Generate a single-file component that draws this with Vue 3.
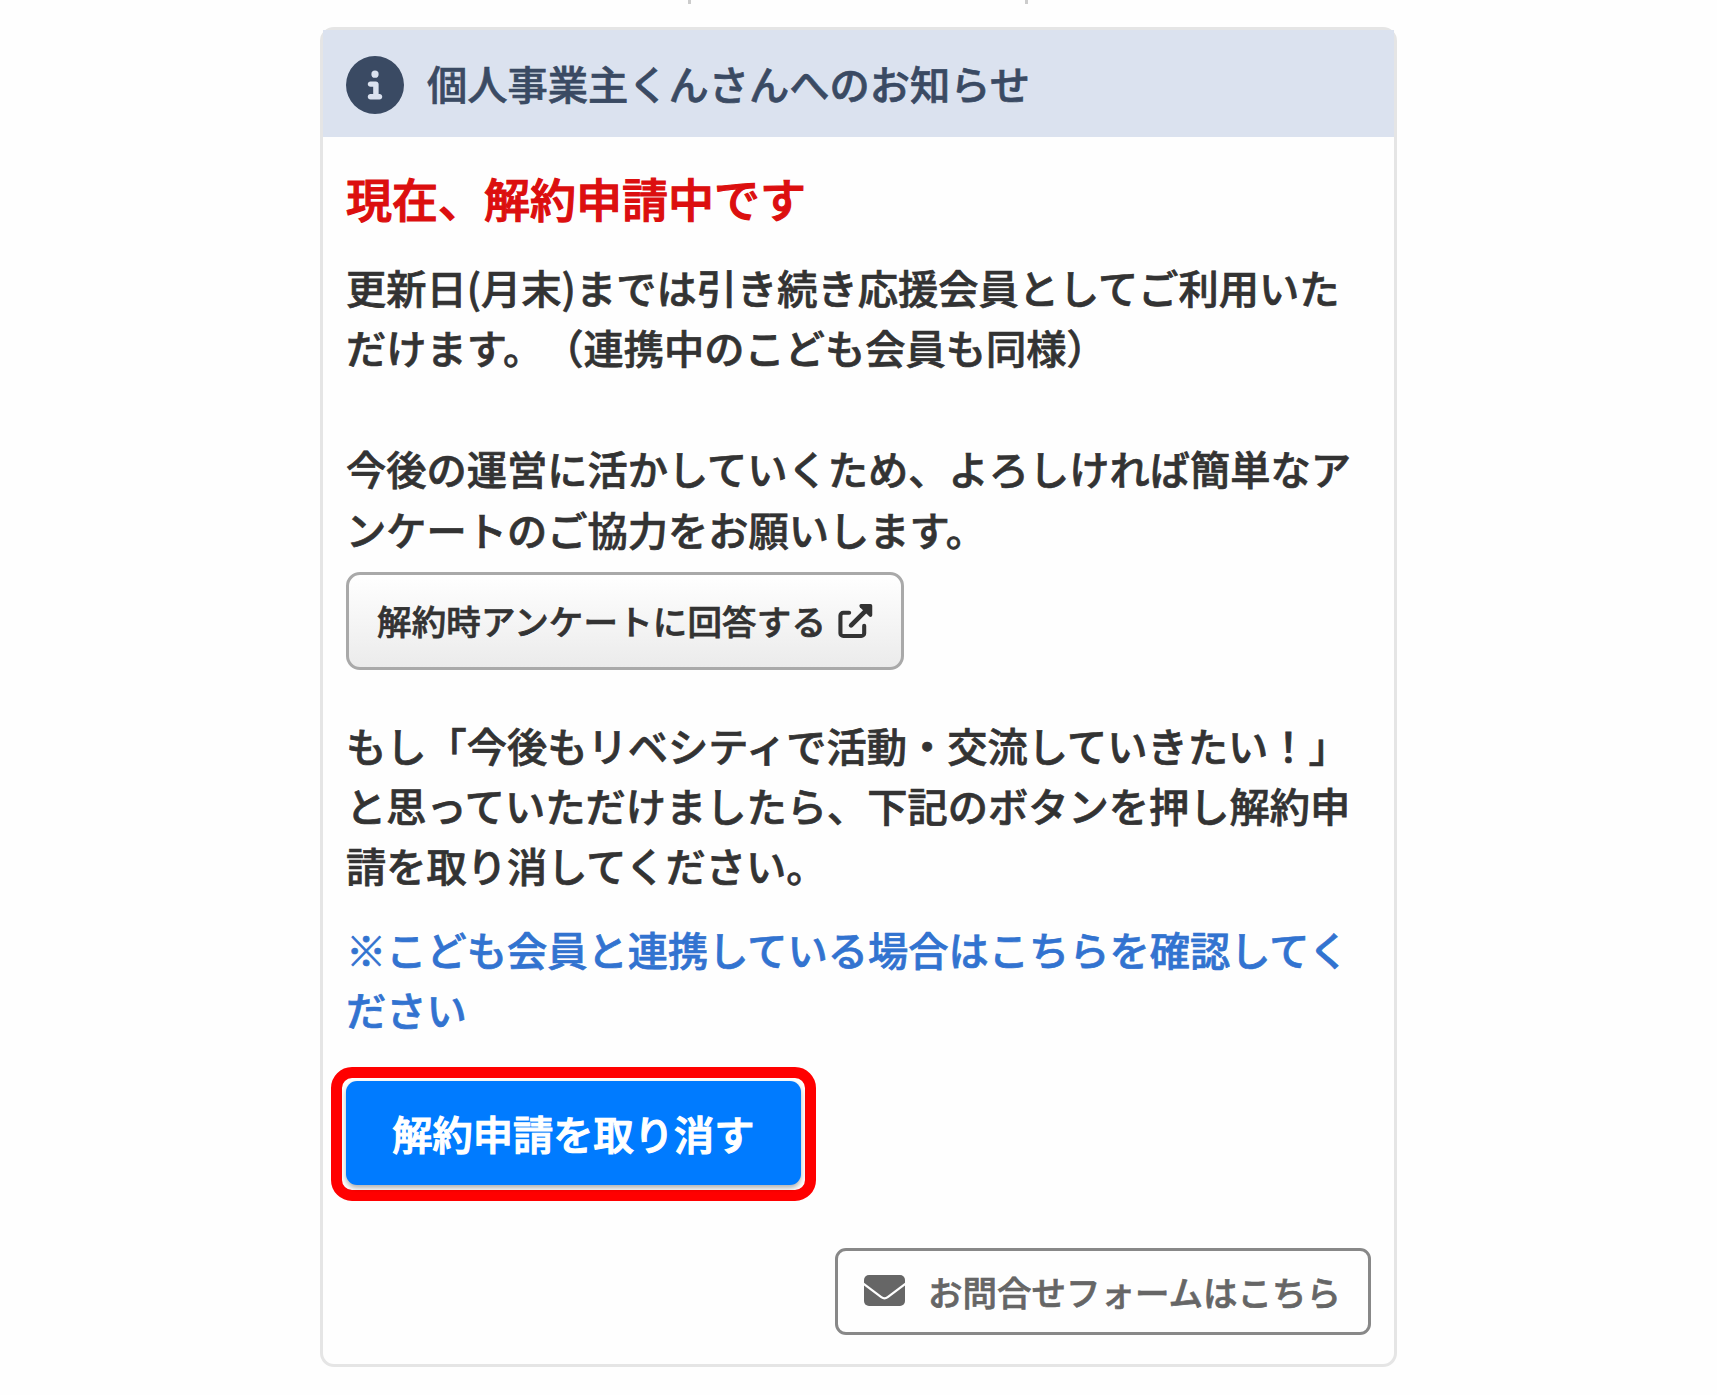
<template>
  <div class="page">
    <div class="tabs-edge">
      <span v-for="n in 2" :key="n" class="tab-divider"></span>
    </div>

    <section class="notice-card">
      <header class="notice-header">
        <svg class="icon-info" viewBox="0 0 512 512" aria-hidden="true">
          <path
            d="M256 512A256 256 0 1 0 256 0a256 256 0 1 0 0 512zM216 336h24V272H216c-13.300 0-24-10.700-24-24s10.700-24 24-24h48c13.300 0 24 10.700 24 24v88h8c13.300 0 24 10.700 24 24s-10.700 24-24 24H216c-13.300 0-24-10.700-24-24s10.700-24 24-24zm40-208a32 32 0 1 1 0 64 32 32 0 1 1 0-64z"
          />
        </svg>
        <span>{{ userName }}さんへのお知らせ</span>
      </header>

      <div class="notice-body">
        <h2 class="status">現在、解約申請中です</h2>

        <p class="text">
          更新日(月末)までは引き続き応援会員としてご利用いた<br />だけます。（連携中のこども会員も同様）
        </p>
        <p class="text survey-text">
          今後の運営に活かしていくため、よろしければ簡単なア<br />ンケートのご協力をお願いします。
        </p>

        <button type="button" class="btn-survey">
          <span>解約時アンケートに回答する</span>
          <svg class="icon-external" viewBox="0 0 36 36" aria-hidden="true">
            <path class="line" d="M11.500 9.500H5.500a3 3 0 0 0-3 3v18a3 3 0 0 0 3 3h18.500a3 3 0 0 0 3-3v-7.500" />
            <path class="line arrow" d="M13.500 22.500L29 7" />
            <path class="head" d="M24 .5h9.500a1.800 1.800 0 0 1 1.800 1.800v9.500c0 1.900-2 2.500-3.200 1.400L22.600 3.700C21.500 2.500 22.100.5 24 .5z" />
          </svg>
        </button>

        <p class="text resume-text">
          もし「今後もリベシティで活動・交流していきたい！」<br />と思っていただけましたら、下記のボタンを押し解約申<br />請を取り消してください。
        </p>

        <a class="text link">※こども会員と連携している場合はこちらを確認してく<br />ださい</a>

        <div class="cancel-wrap">
          <button type="button" class="btn-cancel">解約申請を取り消す</button>
        </div>

        <div class="footer">
          <button type="button" class="btn-contact">
            <svg class="icon-mail" viewBox="0 0 41 31" aria-hidden="true">
              <rect width="41" height="31" rx="5" />
              <path d="M-1 8.500L17.300 22.200q3.200 2.400 6.400 0L42 8.500" />
            </svg>
            <span>お問合せフォームはこちら</span>
          </button>
        </div>
      </div>
    </section>
  </div>
</template>

<script setup>
import { ref } from 'vue'

const userName = ref('個人事業主くん')
</script>

<style>
body {
  background: #fefefe;
}
</style>

<style scoped>
.page {
  width: 1717px;
  height: 1395px;
  overflow: hidden;
  font-family: "Noto Sans CJK JP", sans-serif;
  font-size: 40.25px;
  font-weight: 500;
  line-height: 1.5;
  color: #333;
  text-spacing-trim: space-all;
  white-space: nowrap;
  -webkit-text-stroke: 0.7px currentColor;
}

.tabs-edge {
  display: flex;
  gap: 334px;
  height: 27px;
  padding-left: 688px;
}

.tab-divider {
  width: 3px;
  height: 4px;
  background: #ccc;
}

.notice-card {
  box-sizing: border-box;
  width: 1077px;
  height: 1340px;
  margin-left: 320px;
  border: 3px solid #e5e5e5;
  border-radius: 14px;
}

.notice-header {
  display: flex;
  align-items: center;
  gap: 23px;
  box-sizing: border-box;
  height: 107px;
  padding: 3px 0 0 23px;
  background: #dbe2ef;
  color: #3a4a63;
}

.notice-header span {
  margin-top: -4px;
}

.icon-info {
  width: 58px;
  height: 58px;
  fill: #3a4a63;
}

.notice-body {
  padding: 26px 23px 0;
}

.status {
  margin: 0 0 25px;
  font-size: 46px;
  font-weight: 500;
  color: #dc0f0f;
  -webkit-text-stroke-width: 1.2px;
}

.text {
  margin: 0;
}

.survey-text {
  margin-top: 60.5px;
}

button {
  display: flex;
  align-items: center;
  box-sizing: border-box;
  font: inherit;
}

.btn-survey {
  gap: 12px;
  width: 558px;
  height: 98px;
  margin-top: 12.5px;
  padding: 0 28px;
  border: 3px solid #a9a9a9;
  border-radius: 14px;
  background: linear-gradient(#fff, #ebebeb);
  font-size: 34.5px;
  letter-spacing: 0.15px;
  color: #333;
}

.icon-external {
  width: 36px;
  height: 36px;
}

.icon-external .line {
  fill: none;
  stroke: #333;
  stroke-width: 4.2;
  stroke-linecap: round;
}

.icon-external .arrow {
  stroke-width: 4.8;
}

.icon-external .head {
  fill: #333;
}

.resume-text {
  margin-top: 45px;
}

.link {
  display: block;
  margin-top: 23px;
  color: #3273d0;
}

/* red frame around the cancel button */
.cancel-wrap {
  box-sizing: border-box;
  width: 485px;
  height: 134px;
  margin: 27.5px 0 0 -15px;
  padding: 3px 4px 5px;
  border: 11px solid #f00;
  border-radius: 21px;
}

.btn-cancel {
  justify-content: center;
  width: 455px;
  height: 104px;
  padding: 0;
  border: 0;
  border-radius: 11px;
  background: #007bff;
  box-shadow: 0 3px 5px rgba(0, 0, 0, 0.3);
  color: #fff;
  -webkit-text-stroke-width: 1.2px;
}

.footer {
  display: flex;
  justify-content: flex-end;
  margin-top: 47.5px;
}

.btn-contact {
  gap: 23px;
  width: 536px;
  height: 87px;
  padding: 0 26px;
  border: 3px solid #888;
  border-radius: 11px;
  background: transparent;
  font-size: 34.5px;
  color: #666;
}

.icon-mail {
  width: 41px;
  height: 31px;
  margin-top: -2px;
  fill: #666;
}

.icon-mail path {
  fill: none;
  stroke: #fefefe;
  stroke-width: 2.2;
}
</style>
